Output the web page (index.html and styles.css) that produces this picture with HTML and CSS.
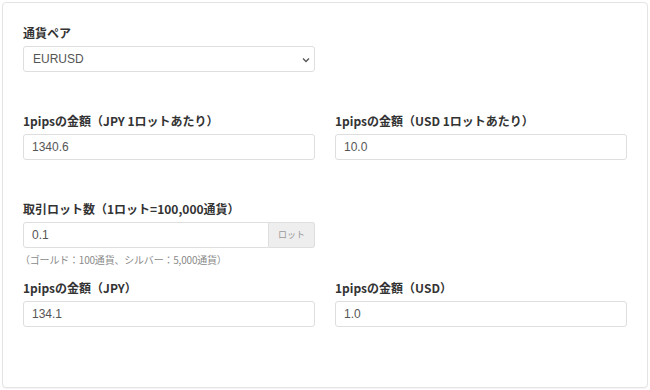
FILE: index.html
```html
<!DOCTYPE html>
<html lang="ja">
<head>
<meta charset="utf-8">
<title>pips計算</title>
<link rel="stylesheet" href="styles.css">
</head>
<body>
<div class="card">
  <div class="row row-first">
    <div class="group">
      <label class="label">通貨ペア</label>
      <div class="select-wrap">
        <div class="control select">EURUSD</div>
        <svg class="chevron" width="8" height="6" viewBox="0 0 8 6"><path d="M1 1.5 L4 4.5 L7 1.5" fill="none" stroke="#555" stroke-width="1.3"/></svg>
      </div>
    </div>
    <div class="group"></div>
  </div>

  <div class="row row-gap">
    <div class="group">
      <label class="label">1pipsの金額（JPY 1ロットあたり）</label>
      <div class="control">1340.6</div>
    </div>
    <div class="group">
      <label class="label">1pipsの金額（USD 1ロットあたり）</label>
      <div class="control">10.0</div>
    </div>
  </div>

  <div class="row row-gap">
    <div class="group">
      <label class="label">取引ロット数（1ロット=100,000通貨）</label>
      <div class="input-group">
        <div class="control grouped">0.1</div>
        <div class="addon">ロット</div>
      </div>
      <p class="help">（ゴールド：100通貨、シルバー：5,000通貨）</p>
    </div>
    <div class="group"></div>
  </div>

  <div class="row row-last">
    <div class="group">
      <label class="label">1pipsの金額（JPY）</label>
      <div class="control">134.1</div>
    </div>
    <div class="group">
      <label class="label">1pipsの金額（USD）</label>
      <div class="control">1.0</div>
    </div>
  </div>
</div>
</body>
</html>
```

FILE: styles.css
```css
* { box-sizing: border-box; }

html, body {
  margin: 0;
  padding: 0;
  background: #ffffff;
}

body {
  font-family: "Liberation Sans", "Noto Sans CJK JP", sans-serif;
  color: #333;
}

.card {
  margin: 2px;
  width: 646px;
  height: 386px;
  border: 1px solid #e4e4e4;
  border-radius: 4px;
  box-shadow: 0 1px 1px rgba(0, 0, 0, 0.04);
  padding: 21px 20px 0 20px;
  background: #fff;
}

.row {
  display: grid;
  grid-template-columns: 292px 292px;
  column-gap: 20px;
}

.row-gap { margin-top: 40px; }
.row-last { margin-top: 12px; }

.label {
  display: block;
  font-family: "Noto Sans CJK JP", "Noto Sans", sans-serif;
  font-weight: 700;
  font-size: 12px;
  line-height: 18px;
  height: 18px;
  color: #333;
  margin-bottom: 4px;
}

.control {
  height: 26px;
  border: 1px solid #dedede;
  border-radius: 3px;
  padding: 0 8px;
  font-family: "Liberation Sans", Arial, sans-serif;
  font-size: 12px;
  line-height: 24px;
  color: #555;
  background: #fff;
}

.select-wrap {
  position: relative;
}

.select { padding-left: 9px; }

.chevron {
  position: absolute;
  right: 5px;
  top: 11px;
}

.input-group {
  display: flex;
  height: 26px;
}

.grouped {
  flex: 1;
  border-radius: 3px 0 0 3px;
}

.addon {
  width: 46px;
  height: 26px;
  border: 1px solid #dedede;
  border-left: none;
  border-radius: 0 3px 3px 0;
  background: #eeeeee;
  color: #999;
  font-family: "Noto Sans CJK JP", sans-serif;
  font-size: 9px;
  line-height: 24px;
  text-align: center;
}

.help {
  margin: 5px 0 0 -3px;
  font-family: "Noto Sans CJK JP", sans-serif;
  font-size: 10px;
  line-height: 14px;
  color: #8a8a8a;
  letter-spacing: -0.2px;
}
```
